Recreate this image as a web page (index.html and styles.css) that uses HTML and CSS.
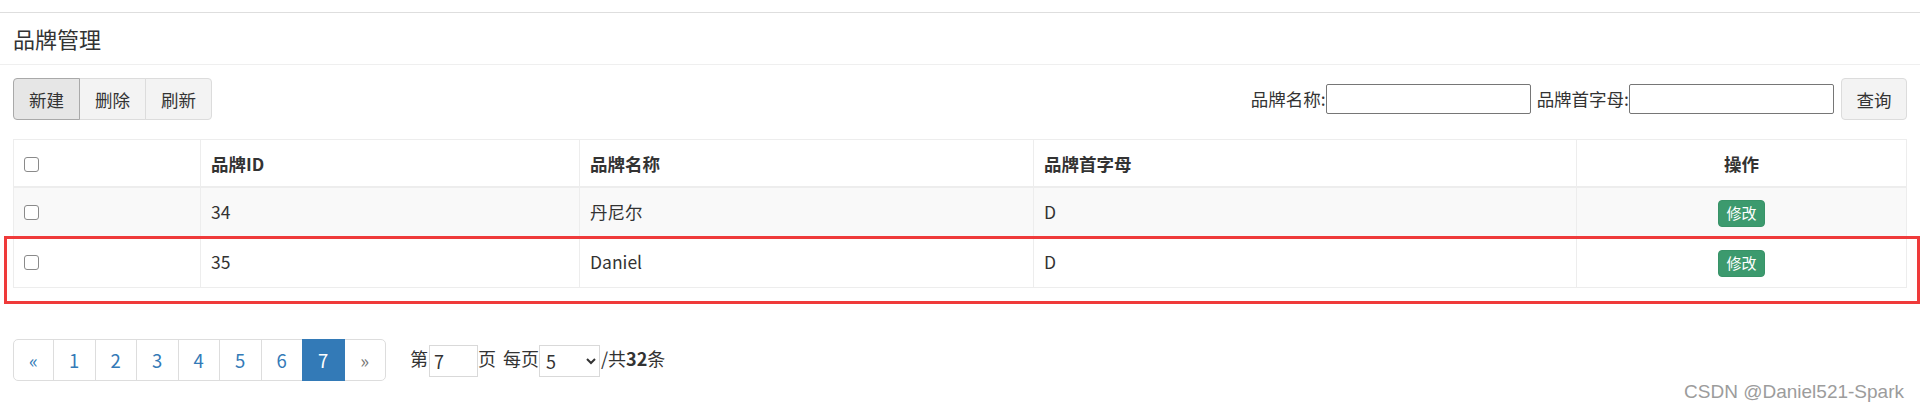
FILE: index.html
```html
<!DOCTYPE html>
<html lang="zh-CN">
<head>
<meta charset="UTF-8" />
<meta name="viewport" content="width=device-width, initial-scale=1.0">
<title>品牌管理</title>
<link rel="stylesheet" href="styles.css">
</head>
<body>

<div class="panel">
  <div class="panel-heading">
    <h4 class="panel-title">品牌管理</h4>
  </div>

  <div class="panel-body">
    <!-- toolbar: actions on the left, search on the right -->
    <div class="toolbar">
      <div class="btn-group">
        <button class="btn active">新建</button>
        <button class="btn">删除</button>
        <button class="btn">刷新</button>
      </div>
      <form class="search">
        <label class="field">品牌名称:<input type="text"></label>
        <label class="field">品牌首字母:<input type="text"></label>
        <button class="btn btn-search" type="button">查询</button>
      </form>
    </div>

    <table class="table">
      <colgroup>
        <col class="col-check">
        <col class="col-id">
        <col class="col-name">
        <col class="col-letter">
        <col>
      </colgroup>
      <thead>
        <tr>
          <th><input type="checkbox" class="check"></th>
          <th>品牌ID</th>
          <th>品牌名称</th>
          <th>品牌首字母</th>
          <th class="center">操作</th>
        </tr>
      </thead>
      <tbody>
        <tr class="odd">
          <td><input type="checkbox" class="check"></td>
          <td>34</td>
          <td>丹尼尔</td>
          <td>D</td>
          <td class="center"><button class="btn-xs">修改</button></td>
        </tr>
        <tr>
          <td><input type="checkbox" class="check"></td>
          <td>35</td>
          <td>Daniel</td>
          <td>D</td>
          <td class="center"><button class="btn-xs">修改</button></td>
        </tr>
      </tbody>
    </table>

    <div class="pager-row">
      <ul class="pagination">
        <li><a href="#">&laquo;</a></li>
        <li><a href="#">1</a></li>
        <li><a href="#">2</a></li>
        <li><a href="#">3</a></li>
        <li><a href="#">4</a></li>
        <li><a href="#">5</a></li>
        <li><a href="#">6</a></li>
        <li class="active"><a href="#">7</a></li>
        <li><a href="#">&raquo;</a></li>
      </ul>
      <div class="page-info">第<input type="text" class="page-input" value="7">页 每页<select class="page-size"><option>5</option><option>10</option><option>20</option></select>/共<b>32</b>条</div>
    </div>
  </div>
</div>

<!-- annotation frame around the second row -->
<div class="mark"></div>

<div class="watermark">CSDN @Daniel521-Spark</div>

</body>
</html>
```

FILE: styles.css
```css
/* Base styles */
body {
  font-family: "Noto Sans CJK SC", "Noto Sans", sans-serif;
  font-size: 17.5px;
  line-height: 1.43;
  margin: 0;
  padding: 0;
  background: #fff;
  color: #333;
}

/* Panel heading */
.panel-heading {
  margin-top: 12px;
  height: 51px;
  padding: 0 13px;
  display: flex;
  align-items: center;
  border-top: 1px solid #dedede;
  border-bottom: 1px solid #efefef;
}

.panel-title {
  margin: 0;
  font-size: 22px;
  font-weight: 400;
  color: #333;
}

.panel-body {
  padding: 0 13px;
}

/* Toolbar */
.toolbar {
  margin-top: 13px;
  display: flex;
  justify-content: space-between;
  align-items: center;
}

.btn {
  font-family: inherit;
  font-size: 17.5px;
  color: #333;
  height: 42px;
  padding: 0 15px;
  background: #f3f3f3;
  border: 1px solid #dcdcdc;
  border-radius: 4px;
  cursor: pointer;
}

.btn-group {
  display: flex;
}

.btn-group .btn {
  width: 67px;
  padding: 0;
  border-radius: 0;
  margin-left: -1px;
}

.btn-group .btn:first-child {
  margin-left: 0;
  border-radius: 4px 0 0 4px;
}

.btn-group .btn:last-child {
  border-radius: 0 4px 4px 0;
}

.btn-group .btn.active {
  position: relative;
  background: #e6e6e6;
  border-color: #a9a9a9;
}

.search {
  display: flex;
  align-items: center;
  gap: 6px;
}

.field {
  display: flex;
  align-items: center;
}

.field input {
  width: 205px;
  height: 30px;
  box-sizing: border-box;
  margin: 0;
  border: 1px solid #767676;
  border-radius: 2px;
  font-family: inherit;
  font-size: 17px;
}

.btn-search {
  width: 66px;
  padding: 0;
  margin-left: 1px;
}

/* Table */
.table {
  width: 100%;
  margin-top: 19px;
  border-collapse: collapse;
  table-layout: fixed;
}

.col-check { width: 187px; }
.col-id { width: 379px; }
.col-name { width: 454px; }
.col-letter { width: 543px; }

.table th,
.table td {
  border: 1px solid #ededed;
  padding: 10px;
  text-align: left;
  vertical-align: middle;
  line-height: 26px;
}

.table th {
  font-weight: 700;
  border-bottom: 2px solid #ededed;
  padding-top: 11px;
  padding-bottom: 9px;
}

.table td {
  height: 28px;
}

.table .center {
  text-align: center;
}

.table tr.odd td {
  background: #f9f9f9;
}

.check {
  appearance: none;
  -webkit-appearance: none;
  display: block;
  width: 15px;
  height: 15px;
  margin: 0;
  border: 1.5px solid #8a8a8a;
  border-radius: 3px;
  background: #fff;
  box-sizing: border-box;
}

.btn-xs {
  font-family: inherit;
  font-size: 15px;
  line-height: 22px;
  height: 27px;
  padding: 0 7px;
  color: #fff;
  background: #3c9a6e;
  border: 1px solid #389368;
  border-radius: 4px;
  vertical-align: middle;
}

/* Pagination */
.pager-row {
  margin-top: 51px;
  display: flex;
  align-items: center;
}

.pagination {
  display: flex;
  list-style: none;
  margin: 0;
  padding: 0;
}

.pagination li a {
  display: block;
  width: 42.5px;
  height: 42px;
  box-sizing: border-box;
  padding: 7px 0;
  margin-left: -1px;
  font-size: 18.5px;
  line-height: 26px;
  text-align: center;
  color: #337ab7;
  text-decoration: none;
  background: #fff;
  border: 1px solid #dddddd;
}

.pagination li:first-child a {
  margin-left: 0;
  width: 41px;
  border-radius: 5px 0 0 5px;
}

.pagination li:last-child a {
  border-radius: 0 5px 5px 0;
  color: #777;
}

.pagination li.active a {
  position: relative;
  color: #fff;
  background: #337ab7;
  border-color: #337ab7;
}

.page-info {
  margin-left: 24px;
  font-size: 18px;
  line-height: 32px;
  word-spacing: 3px;
}

.page-input {
  width: 49px;
  height: 32px;
  box-sizing: border-box;
  margin: 0 0 0 1px;
  padding: 0 4px;
  vertical-align: middle;
  border: 1px solid #d9d9d9;
  font-family: inherit;
  font-size: 18px;
  color: #333;
}

.page-size {
  width: 61px;
  height: 32px;
  margin: 0 1px 0 0;
  padding: 0 2px;
  vertical-align: middle;
  border: 1px solid #d9d9d9;
  border-radius: 0;
  background: #fff;
  font-family: inherit;
  font-size: 18px;
  color: #333;
}

.page-info b {
  font-weight: 700;
}

/* Screenshot annotation + watermark */
.mark {
  position: absolute;
  left: 4px;
  right: 0;
  top: 236px;
  height: 68px;
  box-sizing: border-box;
  border: 3px solid #ef3a3a;
}

.watermark {
  position: absolute;
  right: 16px;
  top: 378px;
  font-family: "Liberation Sans", Arial, sans-serif;
  font-size: 19px;
  color: #9c9c9c;
  text-shadow: 0 0 1px #fff;
}
```
